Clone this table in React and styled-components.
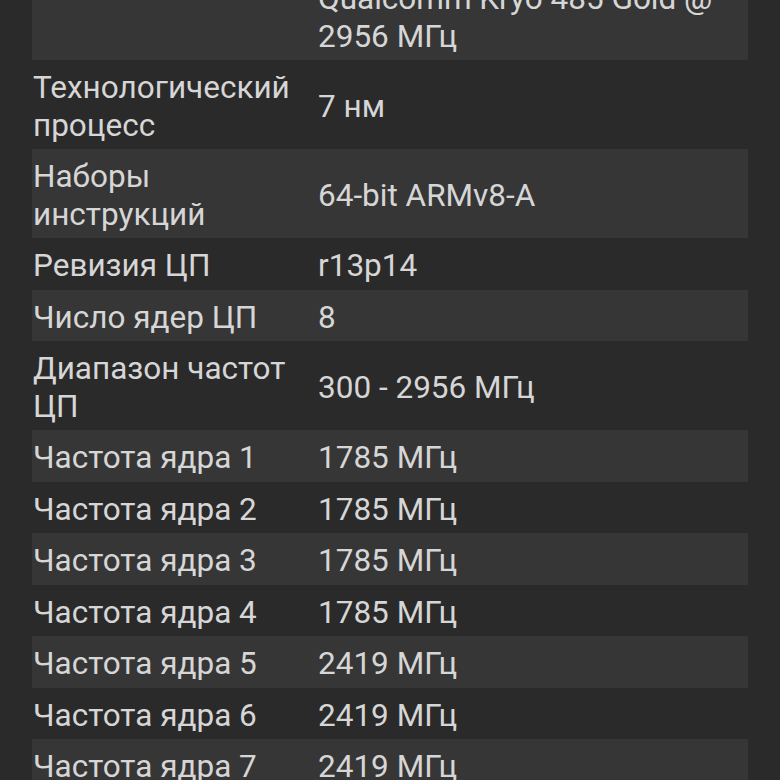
import React from "react";
import styled, { createGlobalStyle } from "styled-components";

const Global = createGlobalStyle`
  html, body {
    margin: 0;
    padding: 0;
    background: #2a2a2a;
    overflow: hidden;
  }
  body {
    font-family: Roboto, "Noto Sans", "Liberation Sans", sans-serif;
  }
`;

const Page = styled.div`
  width: 780px;
  height: 780px;
  overflow: hidden;
  background: #2a2a2a;
`;

const List = styled.div`
  margin: -29px 32px 0 32px;
  display: flex;
  flex-direction: column;
`;

const Row = styled.div`
  display: grid;
  grid-template-columns: 285px 1fr;
  align-items: center;
  padding: 9px 0 5px 1px;
  background: ${(p) => (p.$alt ? "#363636" : "transparent")};
  color: #d6d6d6;
  font-size: 31.5px;
  line-height: 37.5px;
`;

const Label = styled.div`
  padding-right: 6px;
`;

const Value = styled.div``;

const rows = [
  ["", "Qualcomm Kryo 485 Gold @ 2956 МГц"],
  ["Технологический процесс", "7 нм"],
  ["Наборы инструкций", "64-bit ARMv8-A"],
  ["Ревизия ЦП", "r13p14"],
  ["Число ядер ЦП", "8"],
  ["Диапазон частот ЦП", "300 - 2956 МГц"],
  ["Частота ядра 1", "1785 МГц"],
  ["Частота ядра 2", "1785 МГц"],
  ["Частота ядра 3", "1785 МГц"],
  ["Частота ядра 4", "1785 МГц"],
  ["Частота ядра 5", "2419 МГц"],
  ["Частота ядра 6", "2419 МГц"],
  ["Частота ядра 7", "2419 МГц"],
  ["Частота ядра 8", "2956 МГц"],
];

export default function App() {
  return (
    <Page>
      <Global />
      <List>
        {rows.map(([l, v], i) => (
          <Row key={i} $alt={i % 2 === 0}>
            <Label>{l}</Label>
            <Value>{v}</Value>
          </Row>
        ))}
      </List>
    </Page>
  );
}
